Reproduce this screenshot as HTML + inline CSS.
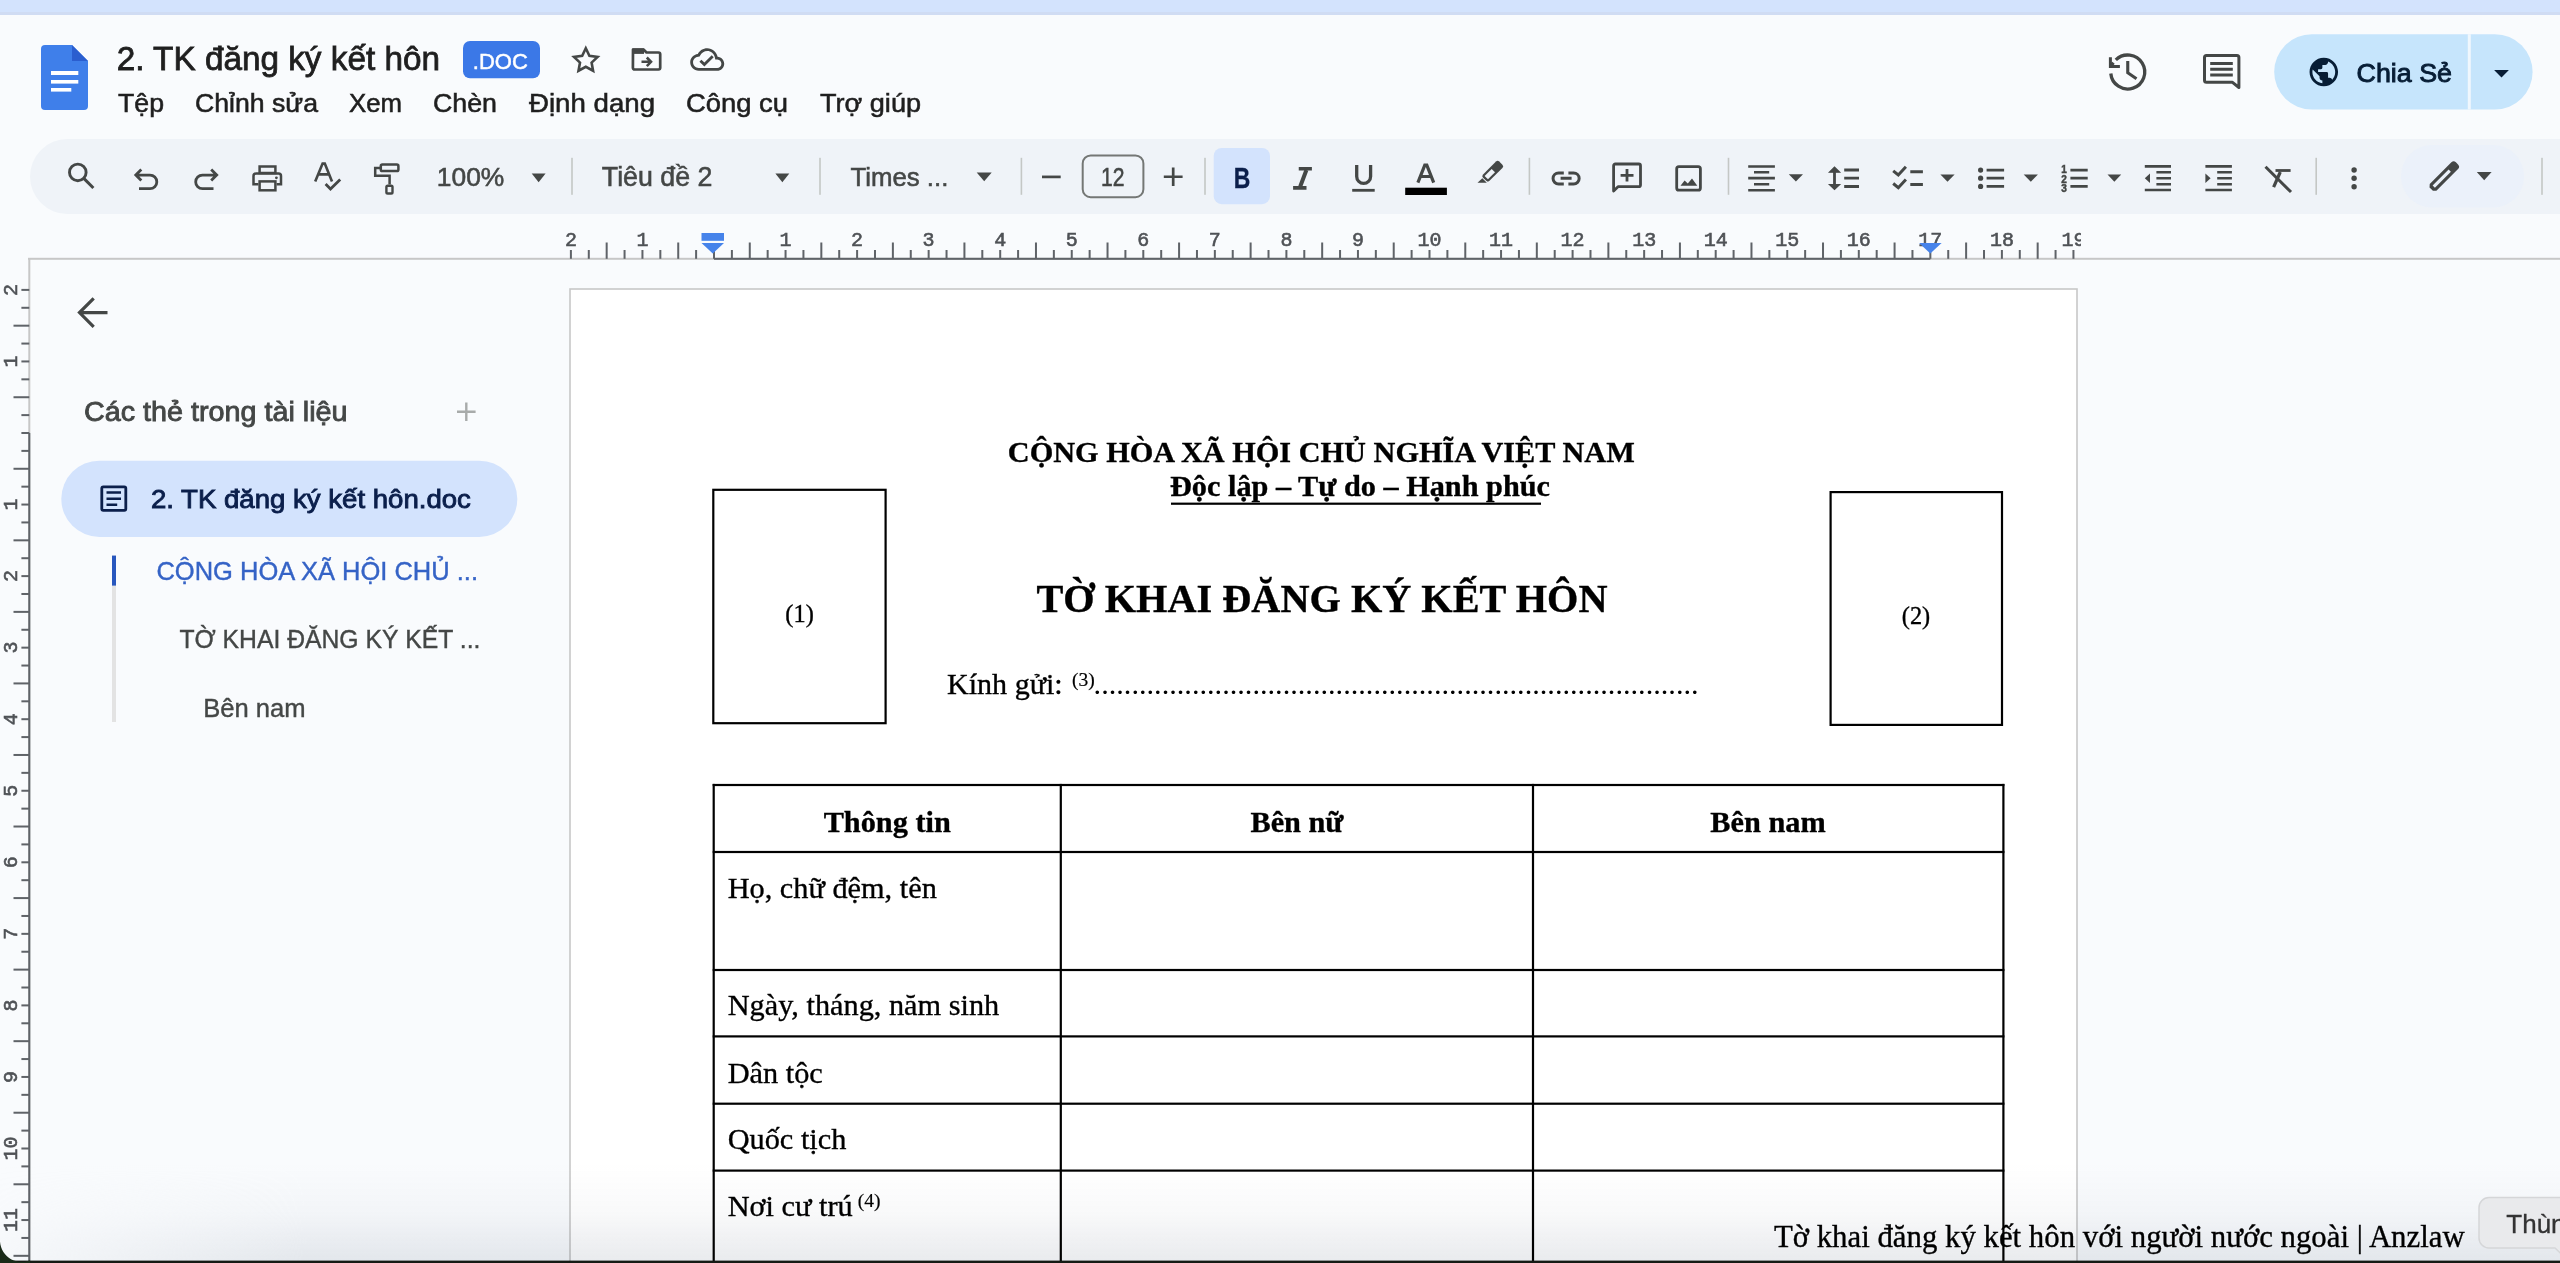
<!DOCTYPE html>
<html><head><meta charset="utf-8"><title>2. TK đăng ký kết hôn</title>
<style>html,body{margin:0;padding:0;background:#f9fbfd;overflow:hidden;width:2560px;height:1263px;font-family:"Liberation Sans",sans-serif}svg{display:block}</style>
</head><body>
<svg width="2560" height="1263" viewBox="0 0 2560 1263">
<rect x="0" y="0" width="2560" height="1263" fill="#f9fbfd"/>
<rect x="0" y="0" width="2560" height="15" fill="#d3e3fd"/>
<rect x="0" y="12" width="2560" height="3" fill="#d0dcf3"/>
<path d="M45,45 H72 L88,61 V106 a4,4 0 0 1 -4,4 H45 a4,4 0 0 1 -4,-4 V49 a4,4 0 0 1 4,-4 Z" fill="#3f7fea"/>
<path d="M72,45 L88,61 H72 Z" fill="#2b5ecf"/>
<rect x="51" y="71" width="27.3" height="4" fill="#fff"/>
<rect x="51" y="80" width="27.3" height="3.6" fill="#fff"/>
<rect x="51" y="88" width="20.3" height="3.6" fill="#fff"/>
<text x="116.7" y="70" font-family="'Liberation Sans'" font-size="33.3" font-weight="400" fill="#1f1f1f" textLength="323.3" lengthAdjust="spacingAndGlyphs"  stroke="#1f1f1f" stroke-width="0.8">2. TK đăng ký kết hôn</text>
<rect x="463" y="41" width="77" height="37.3" rx="7" fill="#3b78e7"/>
<text x="472.8" y="69" font-family="'Liberation Sans'" font-size="22.8" font-weight="400" fill="#ffffff" textLength="55" lengthAdjust="spacingAndGlyphs"  stroke="#ffffff" stroke-width="0.5">.DOC</text>
<text x="118" y="111.6" font-family="'Liberation Sans'" font-size="25.6" font-weight="400" fill="#1f1f1f" textLength="46" lengthAdjust="spacingAndGlyphs"  stroke="#1f1f1f" stroke-width="0.55">Tệp</text>
<text x="195" y="111.6" font-family="'Liberation Sans'" font-size="25.6" font-weight="400" fill="#1f1f1f" textLength="123" lengthAdjust="spacingAndGlyphs"  stroke="#1f1f1f" stroke-width="0.55">Chỉnh sửa</text>
<text x="349" y="111.6" font-family="'Liberation Sans'" font-size="25.6" font-weight="400" fill="#1f1f1f" textLength="53" lengthAdjust="spacingAndGlyphs"  stroke="#1f1f1f" stroke-width="0.55">Xem</text>
<text x="433" y="111.6" font-family="'Liberation Sans'" font-size="25.6" font-weight="400" fill="#1f1f1f" textLength="64" lengthAdjust="spacingAndGlyphs"  stroke="#1f1f1f" stroke-width="0.55">Chèn</text>
<text x="529" y="111.6" font-family="'Liberation Sans'" font-size="25.6" font-weight="400" fill="#1f1f1f" textLength="126" lengthAdjust="spacingAndGlyphs"  stroke="#1f1f1f" stroke-width="0.55">Định dạng</text>
<text x="686" y="111.6" font-family="'Liberation Sans'" font-size="25.6" font-weight="400" fill="#1f1f1f" textLength="102" lengthAdjust="spacingAndGlyphs"  stroke="#1f1f1f" stroke-width="0.55">Công cụ</text>
<text x="820" y="111.6" font-family="'Liberation Sans'" font-size="25.6" font-weight="400" fill="#1f1f1f" textLength="101" lengthAdjust="spacingAndGlyphs"  stroke="#1f1f1f" stroke-width="0.55">Trợ giúp</text>
<rect x="30" y="139" width="2600" height="75" rx="37.5" fill="#eff3f8"/>
<polygon points="585.80,48.30 589.39,55.76 597.59,56.87 591.60,62.59 593.09,70.73 585.80,66.80 578.51,70.73 580.00,62.59 574.01,56.87 582.21,55.76" stroke="#444746" stroke-width="2.6" fill="none" stroke-linejoin="miter" stroke-miterlimit="10"/>
<path d="M633,49.5 H643.5 L646.5,52.5 H658.5 a1.7,1.7 0 0 1 1.7,1.7 V67.8 a1.7,1.7 0 0 1 -1.7,1.7 H634.6 a1.7,1.7 0 0 1 -1.7,-1.7 Z" stroke="#444746" fill="none" stroke-width="2.7" stroke-linejoin="round"/>
<rect x="632.5" y="48.4" width="11.5" height="5.5" fill="#444746"/>
<path d="M641.5,61.8 H650.5 M646.8,57.5 L651,61.8 L646.8,66.1" stroke="#444746" fill="none" stroke-width="2.6"/>
<g transform="translate(690.2,42.53) scale(1.417)"><path fill="#444746" d="M19.35 10.04C18.67 6.59 15.64 4 12 4 9.11 4 6.6 5.64 5.35 8.04 2.34 8.36 0 10.91 0 14c0 3.31 2.69 6 6 6h13c2.760 0 5-2.240 5-5 0-2.640-2.050-4.780-4.650-4.960zM19 18H6c-2.210 0-4-1.790-4-4 0-2.050 1.530-3.760 3.560-3.970l1.070-.11.5-.95C8.080 7.140 9.940 6 12 6c2.620 0 4.880 1.860 5.390 4.430l.3 1.500 1.530.11c1.560.1 2.780 1.410 2.780 2.960 0 1.650-1.350 3-3 3zM10 17l-3.500-3.500 1.410-1.410L10 14.170 15.180 9l1.410 1.410L10 17z"/></g>
<path d="M2115.8,59.9 A17,17 0 1 1 2110.8,73.5" stroke="#444746" fill="none" stroke-width="3.3"/>
<path d="M2110.4,57.3 V66.4 H2119.9" stroke="#444746" fill="none" stroke-width="3"/>
<path d="M2110.6,66.2 L2113.5,62.8" stroke="#444746" fill="none" stroke-width="3.2"/>
<path d="M2127.75,61.1 V72.8 L2136.5,78.8" stroke="#444746" fill="none" stroke-width="3.1"/>
<path d="M2206.5,55.6 H2236.9 a2,2 0 0 1 2,2 V87.5 L2232.5,82.3 H2206.5 a2,2 0 0 1 -2,-2 V57.6 a2,2 0 0 1 2,-2 Z" stroke="#444746" fill="none" stroke-width="3" stroke-linejoin="round"/>
<path d="M2210.2,63.6 H2232.8 M2210.2,69.2 H2232.8 M2210.2,74.9 H2232.8" stroke="#444746" fill="none" stroke-width="3"/>
<rect x="2274.2" y="34.2" width="258.4" height="75.4" rx="37.7" fill="#c6e5fc"/>
<rect x="2467.8" y="34.2" width="3" height="75.4" fill="#f0f7fd"/>
<g transform="translate(2306.7,54.9) scale(1.425)"><path fill="#071d35" d="M12 2C6.48 2 2 6.48 2 12s4.48 10 10 10 10-4.48 10-10S17.52 2 12 2zm-1 17.93c-3.950-.49-7-3.850-7-7.930 0-.62.08-1.210.21-1.790L9 15v1c0 1.100.9 2 2 2v1.930zm6.900-2.540c-.26-.81-1-1.390-1.900-1.390h-1v-3c0-.55-.45-1-1-1H8v-2h2c.55 0 1-.45 1-1V7h2c1.100 0 2-.9 2-2v-.41c2.930 1.190 5 4.060 5 7.410 0 2.080-.8 3.970-2.100 5.390z"/></g>
<text x="2356.5" y="81.5" font-family="'Liberation Sans'" font-size="26.5" font-weight="400" fill="#071d35" textLength="95.5" lengthAdjust="spacingAndGlyphs"  stroke="#071d35" stroke-width="0.9">Chia Sẻ</text>
<path d="M2494.1,70.1 H2508.9 L2501.5,77.6 Z" fill="#071d35"/>
<circle cx="77.8" cy="172.4" r="8.3" stroke="#444746" fill="none" stroke-width="2.9"/>
<path d="M83.8,178.4 L93.4,188" stroke="#444746" fill="none" stroke-width="3"/>
<path d="M141.3,169.6 L135.8,175.1 L141.3,180.6 M136.5,175.1 H150 a6.8,6.8 0 0 1 0,13.6 H139" stroke="#444746" fill="none" stroke-width="2.8" stroke-linejoin="miter"/>
<path d="M211.2,169.6 L216.7,175.1 L211.2,180.6 M216,175.1 H202.5 a6.8,6.8 0 0 0 0,13.6 H213.5" stroke="#444746" fill="none" stroke-width="2.8" stroke-linejoin="miter"/>
<rect x="259.6" y="166.5" width="15.8" height="6.5" stroke="#444746" fill="none" stroke-width="2.5"/>
<path d="M258.4,184.3 H253.5 V176 a2.5,2.5 0 0 1 2.5,-2.5 H278.5 a2.5,2.5 0 0 1 2.5,2.5 V184.3 H276.6" stroke="#444746" fill="none" stroke-width="2.5"/>
<rect x="259.6" y="181.4" width="15.8" height="8.9" stroke="#444746" fill="none" stroke-width="2.5"/>
<circle cx="276.4" cy="177.8" r="1.4" fill="#444746"/>
<path d="M315.2,181.6 L322.6,163.6 H324.8 L332,181.6 M317.6,174.4 H329.4" stroke="#444746" fill="none" stroke-width="2.6"/>
<path d="M325.6,184 L330.5,189 L340.2,179.5" stroke="#444746" fill="none" stroke-width="2.8"/>
<rect x="380.8" y="164.6" width="17.6" height="6.5" rx="1.6" stroke="#444746" fill="none" stroke-width="2.5"/>
<path d="M380.5,168 H375.2 V175.8 H389.6 V184.5" stroke="#444746" fill="none" stroke-width="2.5"/>
<rect x="386.4" y="185.7" width="6.1" height="7.8" rx="1.3" stroke="#444746" fill="none" stroke-width="2.4"/>
<text x="436.8" y="186.4" font-family="'Liberation Sans'" font-size="26.4" font-weight="400" fill="#444746" textLength="67.5" lengthAdjust="spacingAndGlyphs"  stroke="#444746" stroke-width="0.55">100%</text>
<path d="M531.7,173.5 H545.6 L538.65,182.3 Z" fill="#444746"/>
<rect x="571.2" y="157.8" width="1.6" height="37" fill="#c4c7c5"/>
<text x="601.8" y="186.4" font-family="'Liberation Sans'" font-size="26.8" font-weight="400" fill="#444746" textLength="110.6" lengthAdjust="spacingAndGlyphs"  stroke="#444746" stroke-width="0.55">Tiêu đề 2</text>
<path d="M775.4,173.5 H789.3 L782.35,182.3 Z" fill="#444746"/>
<rect x="819.2" y="157.8" width="1.6" height="37" fill="#c4c7c5"/>
<text x="850.4" y="186.4" font-family="'Liberation Sans'" font-size="26.5" font-weight="400" fill="#444746" textLength="98" lengthAdjust="spacingAndGlyphs"  stroke="#444746" stroke-width="0.55">Times ...</text>
<path d="M976.7,172.5 H991.7 L984.20,181.3 Z" fill="#444746"/>
<rect x="1020.6" y="157.8" width="1.6" height="37" fill="#c4c7c5"/>
<path d="M1042,176.9 H1060.7" stroke="#444746" fill="none" stroke-width="2.7"/>
<rect x="1082.7" y="155.4" width="60.7" height="41.8" rx="8" stroke="#747775" stroke-width="2" fill="none"/>
<text x="1112.7" y="185.5" font-family="'Liberation Sans'" font-size="26" font-weight="400" fill="#444746" text-anchor="middle" textLength="23.5" lengthAdjust="spacingAndGlyphs"  stroke="#444746" stroke-width="0.55">12</text>
<path d="M1173.2,167.5 V186 M1163.8,176.75 H1182.6" stroke="#444746" fill="none" stroke-width="2.7"/>
<rect x="1204.2" y="157.8" width="1.6" height="37" fill="#c4c7c5"/>
<rect x="1213.7" y="148" width="56.3" height="56.2" rx="8" fill="#d3e3fd"/>
<text x="1242.1" y="188" font-family="'Liberation Sans'" font-size="29.2" font-weight="700" fill="#0b1f4b" text-anchor="middle" textLength="16.6" lengthAdjust="spacingAndGlyphs"  stroke="#0b1f4b" stroke-width="0.3">B</text>
<path d="M1298.75,168.75 H1311.9 M1293.1,187.95 H1306.5" stroke="#444746" fill="none" stroke-width="3.7"/>
<path d="M1306.4,170 L1300.2,186.5" stroke="#444746" fill="none" stroke-width="4"/>
<path d="M1356.7,165 V176.5 a6.95,6.95 0 0 0 13.9,0 V165" stroke="#444746" fill="none" stroke-width="3.3"/>
<rect x="1352.2" y="188.9" width="22.5" height="2.8" fill="#444746"/>
<path d="M1417.9,182.6 L1424.8,165.2 H1426.8 L1433.7,182.6 M1420.3,176.5 H1431.3" stroke="#444746" fill="none" stroke-width="3.2"/>
<rect x="1405.2" y="187.7" width="41.7" height="7.3" fill="#000"/>
<g transform="translate(1492.7,171.2) rotate(-45)"><rect x="-11.4" y="-4.55" width="22.9" height="9.1" rx="2.3" fill="#444746"/><rect x="-9.1" y="-2.35" width="10" height="4.7" fill="#eff3f8"/></g>
<path d="M1477.5,182.8 L1482.3,178.2 L1486.8,182.8 Z" fill="#444746"/>
<rect x="1528.6000000000001" y="157.8" width="1.6" height="37" fill="#c4c7c5"/>
<path d="M1563.8,172.9 H1558.6 a5.55,5.55 0 0 0 0,11.1 H1563.8 M1568.4,172.9 H1573.6 a5.55,5.55 0 0 1 0,11.1 H1568.4 M1560.6,178.3 H1571.6" stroke="#444746" fill="none" stroke-width="3"/>
<path d="M1613.6,191 V165.7 a1.7,1.7 0 0 1 1.7,-1.7 H1638.8 a1.7,1.7 0 0 1 1.7,1.7 V185 a1.7,1.7 0 0 1 -1.7,1.7 H1618 Z" stroke="#444746" fill="none" stroke-width="2.8" stroke-linejoin="round"/>
<path d="M1627,169 V181.6 M1620.6,175.3 H1633.5" stroke="#444746" fill="none" stroke-width="2.8"/>
<rect x="1676.7" y="166.6" width="23.7" height="23.5" rx="2.2" stroke="#444746" fill="none" stroke-width="2.8"/>
<path d="M1680.5,185.8 L1684.6,180.5 L1687.8,183.6 L1692,178.4 L1697.3,185.8 Z" fill="#444746"/>
<rect x="1727.7" y="157.8" width="1.6" height="37" fill="#c4c7c5"/>
<path d="M1748.2,166.5 H1774.9 M1754,172.2 H1769.2 M1748.2,178.1 H1774.9 M1754,184.2 H1769.2 M1748.2,190.3 H1774.9" stroke="#444746" fill="none" stroke-width="2.6"/>
<path d="M1788.8,174.2 H1803 L1795.90,181.6 Z" fill="#444746"/>
<path d="M1834.5,169 V188" stroke="#444746" fill="none" stroke-width="2.8"/>
<path d="M1829.4,172.2 L1834.5,167.2 L1839.7,172.2 Z M1829.4,184.5 L1834.5,189.5 L1839.7,184.5 Z" fill="#444746" stroke="#444746" stroke-width="1.2"/>
<path d="M1844.2,170 H1859 M1844.2,178.1 H1859 M1844.2,186.5 H1859" stroke="#444746" fill="none" stroke-width="2.8"/>
<path d="M1893.2,170.8 L1898.3,175 L1905.9,166.8 M1893.2,183.5 L1898.3,187.7 L1905.9,179.5" stroke="#444746" fill="none" stroke-width="3"/>
<path d="M1910.3,171.8 H1922.9 M1910.3,184.5 H1922.9" stroke="#444746" fill="none" stroke-width="2.9"/>
<path d="M1940.4,174.4 H1954.6 L1947.50,181.7 Z" fill="#444746"/>
<circle cx="1980.6" cy="170.1" r="2.6" fill="#444746"/>
<circle cx="1980.6" cy="178.2" r="2.6" fill="#444746"/>
<circle cx="1980.6" cy="186.4" r="2.6" fill="#444746"/>
<path d="M1986.6,170.1 H2004.1 M1986.6,178.2 H2004.1 M1986.6,186.4 H2004.1" stroke="#444746" fill="none" stroke-width="2.8"/>
<path d="M2023.7,174.4 H2037.9 L2030.80,181.7 Z" fill="#444746"/>
<text x="2064.1" y="173.4" font-family="'Liberation Sans'" font-size="11.2" font-weight="700" fill="#444746" stroke="#444746" stroke-width="0.5" text-anchor="middle" textLength="5.6" lengthAdjust="spacingAndGlyphs">1</text>
<text x="2064.1" y="182.5" font-family="'Liberation Sans'" font-size="11.2" font-weight="700" fill="#444746" stroke="#444746" stroke-width="0.5" text-anchor="middle" textLength="5.6" lengthAdjust="spacingAndGlyphs">2</text>
<text x="2064.1" y="191.6" font-family="'Liberation Sans'" font-size="11.2" font-weight="700" fill="#444746" stroke="#444746" stroke-width="0.5" text-anchor="middle" textLength="5.6" lengthAdjust="spacingAndGlyphs">3</text>
<path d="M2070.4,170.1 H2087.7 M2070.4,178.2 H2087.7 M2070.4,186.4 H2087.7" stroke="#444746" fill="none" stroke-width="2.8"/>
<path d="M2107.5,174.4 H2121.2 L2114.35,181.7 Z" fill="#444746"/>
<path d="M2144.8,166.4 H2171 M2156.4,172.3 H2171 M2156.4,178.3 H2171 M2156.4,184.2 H2171 M2144.8,190 H2171" stroke="#444746" fill="none" stroke-width="2.6"/>
<path d="M2144.8,178.3 L2150,173.4 V183 Z" fill="#444746"/>
<path d="M2205.4,166.4 H2231.9 M2217.2,172.3 H2231.9 M2217.2,178.3 H2231.9 M2217.2,184.2 H2231.9 M2205.4,190 H2231.9" stroke="#444746" fill="none" stroke-width="2.6"/>
<path d="M2210.6,178.3 L2205.4,173.4 V183 Z" fill="#444746"/>
<path d="M2265.5,166.8 L2291,192" stroke="#444746" fill="none" stroke-width="3"/>
<path d="M2275.5,170.5 H2290.6" stroke="#444746" fill="none" stroke-width="2.8"/>
<path d="M2280.3,172 L2273.6,187.1" stroke="#444746" fill="none" stroke-width="3.2"/>
<rect x="2315.3999999999996" y="157.8" width="1.6" height="37" fill="#c4c7c5"/>
<circle cx="2354.1" cy="170" r="2.7" fill="#444746"/>
<circle cx="2354.1" cy="178.3" r="2.7" fill="#444746"/>
<circle cx="2354.1" cy="186.8" r="2.7" fill="#444746"/>
<rect x="2401" y="145" width="123" height="62.5" rx="31" fill="#ebf1fa"/>
<g transform="translate(2444.1,176.3) rotate(-45)"><path d="M-18.2,-2.4 L-15.6,-4.7 H15 a3.2,3.2 0 0 1 3.2,3.2 V1.5 a3.2,3.2 0 0 1 -3.2,3.2 H-15.6 L-18.2,2.4 Z" fill="#444746"/><rect x="-14.6" y="-1.6" width="22.6" height="3.2" fill="#ebf1fa"/></g>
<path d="M2476.8,172 H2491.6 L2484.20,180.2 Z" fill="#444746"/>
<rect x="2541.2" y="157.8" width="1.6" height="37" fill="#c4c7c5"/>
<rect x="28" y="257.8" width="2532" height="2" fill="#c7c7c7"/>
<rect x="714.0" y="257.8" width="1216.3" height="2" fill="#5f6368"/>
<rect x="569.90" y="250" width="2" height="8.8" fill="#5f6368"/>
<rect x="587.79" y="250" width="2" height="8.8" fill="#5f6368"/>
<rect x="605.67" y="242.5" width="2" height="16.3" fill="#5f6368"/>
<rect x="623.56" y="250" width="2" height="8.8" fill="#5f6368"/>
<rect x="641.45" y="250" width="2" height="8.8" fill="#5f6368"/>
<rect x="659.34" y="250" width="2" height="8.8" fill="#5f6368"/>
<rect x="677.23" y="242.5" width="2" height="16.3" fill="#5f6368"/>
<rect x="695.11" y="250" width="2" height="8.8" fill="#5f6368"/>
<rect x="713.00" y="250" width="2" height="8.8" fill="#5f6368"/>
<rect x="730.89" y="250" width="2" height="8.8" fill="#5f6368"/>
<rect x="748.77" y="242.5" width="2" height="16.3" fill="#5f6368"/>
<rect x="766.66" y="250" width="2" height="8.8" fill="#5f6368"/>
<rect x="784.55" y="250" width="2" height="8.8" fill="#5f6368"/>
<rect x="802.44" y="250" width="2" height="8.8" fill="#5f6368"/>
<rect x="820.33" y="242.5" width="2" height="16.3" fill="#5f6368"/>
<rect x="838.21" y="250" width="2" height="8.8" fill="#5f6368"/>
<rect x="856.10" y="250" width="2" height="8.8" fill="#5f6368"/>
<rect x="873.99" y="250" width="2" height="8.8" fill="#5f6368"/>
<rect x="891.88" y="242.5" width="2" height="16.3" fill="#5f6368"/>
<rect x="909.76" y="250" width="2" height="8.8" fill="#5f6368"/>
<rect x="927.65" y="250" width="2" height="8.8" fill="#5f6368"/>
<rect x="945.54" y="250" width="2" height="8.8" fill="#5f6368"/>
<rect x="963.42" y="242.5" width="2" height="16.3" fill="#5f6368"/>
<rect x="981.31" y="250" width="2" height="8.8" fill="#5f6368"/>
<rect x="999.20" y="250" width="2" height="8.8" fill="#5f6368"/>
<rect x="1017.09" y="250" width="2" height="8.8" fill="#5f6368"/>
<rect x="1034.97" y="242.5" width="2" height="16.3" fill="#5f6368"/>
<rect x="1052.86" y="250" width="2" height="8.8" fill="#5f6368"/>
<rect x="1070.75" y="250" width="2" height="8.8" fill="#5f6368"/>
<rect x="1088.64" y="250" width="2" height="8.8" fill="#5f6368"/>
<rect x="1106.53" y="242.5" width="2" height="16.3" fill="#5f6368"/>
<rect x="1124.41" y="250" width="2" height="8.8" fill="#5f6368"/>
<rect x="1142.30" y="250" width="2" height="8.8" fill="#5f6368"/>
<rect x="1160.19" y="250" width="2" height="8.8" fill="#5f6368"/>
<rect x="1178.08" y="242.5" width="2" height="16.3" fill="#5f6368"/>
<rect x="1195.96" y="250" width="2" height="8.8" fill="#5f6368"/>
<rect x="1213.85" y="250" width="2" height="8.8" fill="#5f6368"/>
<rect x="1231.74" y="250" width="2" height="8.8" fill="#5f6368"/>
<rect x="1249.62" y="242.5" width="2" height="16.3" fill="#5f6368"/>
<rect x="1267.51" y="250" width="2" height="8.8" fill="#5f6368"/>
<rect x="1285.40" y="250" width="2" height="8.8" fill="#5f6368"/>
<rect x="1303.29" y="250" width="2" height="8.8" fill="#5f6368"/>
<rect x="1321.17" y="242.5" width="2" height="16.3" fill="#5f6368"/>
<rect x="1339.06" y="250" width="2" height="8.8" fill="#5f6368"/>
<rect x="1356.95" y="250" width="2" height="8.8" fill="#5f6368"/>
<rect x="1374.84" y="250" width="2" height="8.8" fill="#5f6368"/>
<rect x="1392.72" y="242.5" width="2" height="16.3" fill="#5f6368"/>
<rect x="1410.61" y="250" width="2" height="8.8" fill="#5f6368"/>
<rect x="1428.50" y="250" width="2" height="8.8" fill="#5f6368"/>
<rect x="1446.39" y="250" width="2" height="8.8" fill="#5f6368"/>
<rect x="1464.28" y="242.5" width="2" height="16.3" fill="#5f6368"/>
<rect x="1482.16" y="250" width="2" height="8.8" fill="#5f6368"/>
<rect x="1500.05" y="250" width="2" height="8.8" fill="#5f6368"/>
<rect x="1517.94" y="250" width="2" height="8.8" fill="#5f6368"/>
<rect x="1535.82" y="242.5" width="2" height="16.3" fill="#5f6368"/>
<rect x="1553.71" y="250" width="2" height="8.8" fill="#5f6368"/>
<rect x="1571.60" y="250" width="2" height="8.8" fill="#5f6368"/>
<rect x="1589.49" y="250" width="2" height="8.8" fill="#5f6368"/>
<rect x="1607.38" y="242.5" width="2" height="16.3" fill="#5f6368"/>
<rect x="1625.26" y="250" width="2" height="8.8" fill="#5f6368"/>
<rect x="1643.15" y="250" width="2" height="8.8" fill="#5f6368"/>
<rect x="1661.04" y="250" width="2" height="8.8" fill="#5f6368"/>
<rect x="1678.92" y="242.5" width="2" height="16.3" fill="#5f6368"/>
<rect x="1696.81" y="250" width="2" height="8.8" fill="#5f6368"/>
<rect x="1714.70" y="250" width="2" height="8.8" fill="#5f6368"/>
<rect x="1732.59" y="250" width="2" height="8.8" fill="#5f6368"/>
<rect x="1750.47" y="242.5" width="2" height="16.3" fill="#5f6368"/>
<rect x="1768.36" y="250" width="2" height="8.8" fill="#5f6368"/>
<rect x="1786.25" y="250" width="2" height="8.8" fill="#5f6368"/>
<rect x="1804.14" y="250" width="2" height="8.8" fill="#5f6368"/>
<rect x="1822.02" y="242.5" width="2" height="16.3" fill="#5f6368"/>
<rect x="1839.91" y="250" width="2" height="8.8" fill="#5f6368"/>
<rect x="1857.80" y="250" width="2" height="8.8" fill="#5f6368"/>
<rect x="1875.69" y="250" width="2" height="8.8" fill="#5f6368"/>
<rect x="1893.58" y="242.5" width="2" height="16.3" fill="#5f6368"/>
<rect x="1911.46" y="250" width="2" height="8.8" fill="#5f6368"/>
<rect x="1929.35" y="250" width="2" height="8.8" fill="#5f6368"/>
<rect x="1947.24" y="250" width="2" height="8.8" fill="#5f6368"/>
<rect x="1965.12" y="242.5" width="2" height="16.3" fill="#5f6368"/>
<rect x="1983.01" y="250" width="2" height="8.8" fill="#5f6368"/>
<rect x="2000.90" y="250" width="2" height="8.8" fill="#5f6368"/>
<rect x="2018.79" y="250" width="2" height="8.8" fill="#5f6368"/>
<rect x="2036.67" y="242.5" width="2" height="16.3" fill="#5f6368"/>
<rect x="2054.56" y="250" width="2" height="8.8" fill="#5f6368"/>
<rect x="2072.45" y="250" width="2" height="8.8" fill="#5f6368"/>
<defs><clipPath id="rc"><rect x="0" y="215" width="2081" height="40"/></clipPath></defs><g clip-path="url(#rc)">
<text x="570.9" y="246.3" font-family="'Liberation Mono'" font-size="20" font-weight="400" fill="#4f5256" text-anchor="middle"  stroke="#4f5256" stroke-width="0.6">2</text>
<text x="642.5" y="246.3" font-family="'Liberation Mono'" font-size="20" font-weight="400" fill="#4f5256" text-anchor="middle"  stroke="#4f5256" stroke-width="0.6">1</text>
<text x="785.5" y="246.3" font-family="'Liberation Mono'" font-size="20" font-weight="400" fill="#4f5256" text-anchor="middle"  stroke="#4f5256" stroke-width="0.6">1</text>
<text x="857.1" y="246.3" font-family="'Liberation Mono'" font-size="20" font-weight="400" fill="#4f5256" text-anchor="middle"  stroke="#4f5256" stroke-width="0.6">2</text>
<text x="928.6" y="246.3" font-family="'Liberation Mono'" font-size="20" font-weight="400" fill="#4f5256" text-anchor="middle"  stroke="#4f5256" stroke-width="0.6">3</text>
<text x="1000.2" y="246.3" font-family="'Liberation Mono'" font-size="20" font-weight="400" fill="#4f5256" text-anchor="middle"  stroke="#4f5256" stroke-width="0.6">4</text>
<text x="1071.8" y="246.3" font-family="'Liberation Mono'" font-size="20" font-weight="400" fill="#4f5256" text-anchor="middle"  stroke="#4f5256" stroke-width="0.6">5</text>
<text x="1143.3" y="246.3" font-family="'Liberation Mono'" font-size="20" font-weight="400" fill="#4f5256" text-anchor="middle"  stroke="#4f5256" stroke-width="0.6">6</text>
<text x="1214.8" y="246.3" font-family="'Liberation Mono'" font-size="20" font-weight="400" fill="#4f5256" text-anchor="middle"  stroke="#4f5256" stroke-width="0.6">7</text>
<text x="1286.4" y="246.3" font-family="'Liberation Mono'" font-size="20" font-weight="400" fill="#4f5256" text-anchor="middle"  stroke="#4f5256" stroke-width="0.6">8</text>
<text x="1357.9" y="246.3" font-family="'Liberation Mono'" font-size="20" font-weight="400" fill="#4f5256" text-anchor="middle"  stroke="#4f5256" stroke-width="0.6">9</text>
<text x="1429.5" y="246.3" font-family="'Liberation Mono'" font-size="20" font-weight="400" fill="#4f5256" text-anchor="middle"  stroke="#4f5256" stroke-width="0.6">10</text>
<text x="1501.0" y="246.3" font-family="'Liberation Mono'" font-size="20" font-weight="400" fill="#4f5256" text-anchor="middle"  stroke="#4f5256" stroke-width="0.6">11</text>
<text x="1572.6" y="246.3" font-family="'Liberation Mono'" font-size="20" font-weight="400" fill="#4f5256" text-anchor="middle"  stroke="#4f5256" stroke-width="0.6">12</text>
<text x="1644.2" y="246.3" font-family="'Liberation Mono'" font-size="20" font-weight="400" fill="#4f5256" text-anchor="middle"  stroke="#4f5256" stroke-width="0.6">13</text>
<text x="1715.7" y="246.3" font-family="'Liberation Mono'" font-size="20" font-weight="400" fill="#4f5256" text-anchor="middle"  stroke="#4f5256" stroke-width="0.6">14</text>
<text x="1787.2" y="246.3" font-family="'Liberation Mono'" font-size="20" font-weight="400" fill="#4f5256" text-anchor="middle"  stroke="#4f5256" stroke-width="0.6">15</text>
<text x="1858.8" y="246.3" font-family="'Liberation Mono'" font-size="20" font-weight="400" fill="#4f5256" text-anchor="middle"  stroke="#4f5256" stroke-width="0.6">16</text>
<text x="1930.3" y="246.3" font-family="'Liberation Mono'" font-size="20" font-weight="400" fill="#4f5256" text-anchor="middle"  stroke="#4f5256" stroke-width="0.6">17</text>
<text x="2001.9" y="246.3" font-family="'Liberation Mono'" font-size="20" font-weight="400" fill="#4f5256" text-anchor="middle"  stroke="#4f5256" stroke-width="0.6">18</text>
<text x="2073.4" y="246.3" font-family="'Liberation Mono'" font-size="20" font-weight="400" fill="#4f5256" text-anchor="middle"  stroke="#4f5256" stroke-width="0.6">19</text>
</g>
<rect x="701.5" y="233" width="22.5" height="7.8" fill="#4683ea"/>
<path d="M701.5,243 H724 L712.75,253.5 Z" fill="#4683ea"/>
<path d="M1919.1,243 H1941.6 L1930.3,253.5 Z" fill="#4683ea"/>
<rect x="28.3" y="259" width="2" height="1004" fill="#c7c7c7"/>
<rect x="28.3" y="433.0" width="2" height="830" fill="#5f6368"/>
<rect x="21.4" y="288.90" width="7.9" height="2" fill="#5f6368"/>
<rect x="21.4" y="306.79" width="7.9" height="2" fill="#5f6368"/>
<rect x="13.5" y="324.68" width="15.8" height="2" fill="#5f6368"/>
<rect x="21.4" y="342.56" width="7.9" height="2" fill="#5f6368"/>
<rect x="21.4" y="360.45" width="7.9" height="2" fill="#5f6368"/>
<rect x="21.4" y="378.34" width="7.9" height="2" fill="#5f6368"/>
<rect x="13.5" y="396.23" width="15.8" height="2" fill="#5f6368"/>
<rect x="21.4" y="414.11" width="7.9" height="2" fill="#5f6368"/>
<rect x="21.4" y="432.00" width="7.9" height="2" fill="#5f6368"/>
<rect x="21.4" y="449.89" width="7.9" height="2" fill="#5f6368"/>
<rect x="13.5" y="467.77" width="15.8" height="2" fill="#5f6368"/>
<rect x="21.4" y="485.66" width="7.9" height="2" fill="#5f6368"/>
<rect x="21.4" y="503.55" width="7.9" height="2" fill="#5f6368"/>
<rect x="21.4" y="521.44" width="7.9" height="2" fill="#5f6368"/>
<rect x="13.5" y="539.33" width="15.8" height="2" fill="#5f6368"/>
<rect x="21.4" y="557.21" width="7.9" height="2" fill="#5f6368"/>
<rect x="21.4" y="575.10" width="7.9" height="2" fill="#5f6368"/>
<rect x="21.4" y="592.99" width="7.9" height="2" fill="#5f6368"/>
<rect x="13.5" y="610.88" width="15.8" height="2" fill="#5f6368"/>
<rect x="21.4" y="628.76" width="7.9" height="2" fill="#5f6368"/>
<rect x="21.4" y="646.65" width="7.9" height="2" fill="#5f6368"/>
<rect x="21.4" y="664.54" width="7.9" height="2" fill="#5f6368"/>
<rect x="13.5" y="682.42" width="15.8" height="2" fill="#5f6368"/>
<rect x="21.4" y="700.31" width="7.9" height="2" fill="#5f6368"/>
<rect x="21.4" y="718.20" width="7.9" height="2" fill="#5f6368"/>
<rect x="21.4" y="736.09" width="7.9" height="2" fill="#5f6368"/>
<rect x="13.5" y="753.97" width="15.8" height="2" fill="#5f6368"/>
<rect x="21.4" y="771.86" width="7.9" height="2" fill="#5f6368"/>
<rect x="21.4" y="789.75" width="7.9" height="2" fill="#5f6368"/>
<rect x="21.4" y="807.64" width="7.9" height="2" fill="#5f6368"/>
<rect x="13.5" y="825.52" width="15.8" height="2" fill="#5f6368"/>
<rect x="21.4" y="843.41" width="7.9" height="2" fill="#5f6368"/>
<rect x="21.4" y="861.30" width="7.9" height="2" fill="#5f6368"/>
<rect x="21.4" y="879.19" width="7.9" height="2" fill="#5f6368"/>
<rect x="13.5" y="897.08" width="15.8" height="2" fill="#5f6368"/>
<rect x="21.4" y="914.96" width="7.9" height="2" fill="#5f6368"/>
<rect x="21.4" y="932.85" width="7.9" height="2" fill="#5f6368"/>
<rect x="21.4" y="950.74" width="7.9" height="2" fill="#5f6368"/>
<rect x="13.5" y="968.62" width="15.8" height="2" fill="#5f6368"/>
<rect x="21.4" y="986.51" width="7.9" height="2" fill="#5f6368"/>
<rect x="21.4" y="1004.40" width="7.9" height="2" fill="#5f6368"/>
<rect x="21.4" y="1022.29" width="7.9" height="2" fill="#5f6368"/>
<rect x="13.5" y="1040.17" width="15.8" height="2" fill="#5f6368"/>
<rect x="21.4" y="1058.06" width="7.9" height="2" fill="#5f6368"/>
<rect x="21.4" y="1075.95" width="7.9" height="2" fill="#5f6368"/>
<rect x="21.4" y="1093.84" width="7.9" height="2" fill="#5f6368"/>
<rect x="13.5" y="1111.72" width="15.8" height="2" fill="#5f6368"/>
<rect x="21.4" y="1129.61" width="7.9" height="2" fill="#5f6368"/>
<rect x="21.4" y="1147.50" width="7.9" height="2" fill="#5f6368"/>
<rect x="21.4" y="1165.39" width="7.9" height="2" fill="#5f6368"/>
<rect x="13.5" y="1183.28" width="15.8" height="2" fill="#5f6368"/>
<rect x="21.4" y="1201.16" width="7.9" height="2" fill="#5f6368"/>
<rect x="21.4" y="1219.05" width="7.9" height="2" fill="#5f6368"/>
<rect x="21.4" y="1236.94" width="7.9" height="2" fill="#5f6368"/>
<rect x="13.5" y="1254.82" width="15.8" height="2" fill="#5f6368"/>
<text x="0" y="0" transform="translate(16.5,289.9) rotate(-90)" font-family="'Liberation Mono'" font-size="20" fill="#4f5256" stroke="#4f5256" stroke-width="0.6" text-anchor="middle">2</text>
<text x="0" y="0" transform="translate(16.5,361.4) rotate(-90)" font-family="'Liberation Mono'" font-size="20" fill="#4f5256" stroke="#4f5256" stroke-width="0.6" text-anchor="middle">1</text>
<text x="0" y="0" transform="translate(16.5,504.6) rotate(-90)" font-family="'Liberation Mono'" font-size="20" fill="#4f5256" stroke="#4f5256" stroke-width="0.6" text-anchor="middle">1</text>
<text x="0" y="0" transform="translate(16.5,576.1) rotate(-90)" font-family="'Liberation Mono'" font-size="20" fill="#4f5256" stroke="#4f5256" stroke-width="0.6" text-anchor="middle">2</text>
<text x="0" y="0" transform="translate(16.5,647.6) rotate(-90)" font-family="'Liberation Mono'" font-size="20" fill="#4f5256" stroke="#4f5256" stroke-width="0.6" text-anchor="middle">3</text>
<text x="0" y="0" transform="translate(16.5,719.2) rotate(-90)" font-family="'Liberation Mono'" font-size="20" fill="#4f5256" stroke="#4f5256" stroke-width="0.6" text-anchor="middle">4</text>
<text x="0" y="0" transform="translate(16.5,790.8) rotate(-90)" font-family="'Liberation Mono'" font-size="20" fill="#4f5256" stroke="#4f5256" stroke-width="0.6" text-anchor="middle">5</text>
<text x="0" y="0" transform="translate(16.5,862.3) rotate(-90)" font-family="'Liberation Mono'" font-size="20" fill="#4f5256" stroke="#4f5256" stroke-width="0.6" text-anchor="middle">6</text>
<text x="0" y="0" transform="translate(16.5,933.8) rotate(-90)" font-family="'Liberation Mono'" font-size="20" fill="#4f5256" stroke="#4f5256" stroke-width="0.6" text-anchor="middle">7</text>
<text x="0" y="0" transform="translate(16.5,1005.4) rotate(-90)" font-family="'Liberation Mono'" font-size="20" fill="#4f5256" stroke="#4f5256" stroke-width="0.6" text-anchor="middle">8</text>
<text x="0" y="0" transform="translate(16.5,1076.9) rotate(-90)" font-family="'Liberation Mono'" font-size="20" fill="#4f5256" stroke="#4f5256" stroke-width="0.6" text-anchor="middle">9</text>
<text x="0" y="0" transform="translate(16.5,1148.5) rotate(-90)" font-family="'Liberation Mono'" font-size="20" fill="#4f5256" stroke="#4f5256" stroke-width="0.6" text-anchor="middle">10</text>
<text x="0" y="0" transform="translate(16.5,1220.0) rotate(-90)" font-family="'Liberation Mono'" font-size="20" fill="#4f5256" stroke="#4f5256" stroke-width="0.6" text-anchor="middle">11</text>
<path d="M107.5,312.6 H80 M93.7,298.4 L79.5,312.6 L93.7,326.8" stroke="#444746" stroke-width="3.2" fill="none"/>
<text x="84" y="421" font-family="'Liberation Sans'" font-size="26.8" font-weight="400" fill="#444746" textLength="263.5" lengthAdjust="spacingAndGlyphs"  stroke="#444746" stroke-width="0.85">Các thẻ trong tài liệu</text>
<path d="M466.3,402.5 V421 M457,411.8 H475.6" stroke="#a8abaa" stroke-width="2.4"/>
<rect x="61.3" y="460.7" width="456" height="76.3" rx="38" fill="#d3e3fd"/>
<rect x="101.8" y="486.8" width="24" height="23.5" rx="1.5" stroke="#0b1f4b" stroke-width="2.8" fill="none"/>
<path d="M106.5,492.6 H121 M106.5,498.7 H121 M106.5,504.7 H117.2" stroke="#0b1f4b" stroke-width="2.5"/>
<text x="150.9" y="508" font-family="'Liberation Sans'" font-size="26.5" font-weight="400" fill="#0b1f4b" textLength="320" lengthAdjust="spacingAndGlyphs"  stroke="#0b1f4b" stroke-width="0.9">2. TK đăng ký kết hôn.doc</text>
<rect x="112" y="555.6" width="4" height="166.4" fill="#e3e3e3"/>
<rect x="112" y="555.6" width="4" height="30" fill="#2857be"/>
<text x="156.4" y="580" font-family="'Liberation Sans'" font-size="26" font-weight="400" fill="#3563c6" textLength="321.6" lengthAdjust="spacingAndGlyphs"  stroke="#3563c6" stroke-width="0.4">CỘNG HÒA XÃ HỘI CHỦ ...</text>
<text x="179.4" y="648.3" font-family="'Liberation Sans'" font-size="26" font-weight="400" fill="#444746" textLength="301" lengthAdjust="spacingAndGlyphs"  stroke="#444746" stroke-width="0.4">TỜ KHAI ĐĂNG KÝ KẾT ...</text>
<text x="203.2" y="717" font-family="'Liberation Sans'" font-size="26" font-weight="400" fill="#444746" textLength="102.5" lengthAdjust="spacingAndGlyphs"  stroke="#444746" stroke-width="0.4">Bên nam</text>
<rect x="570" y="289" width="1507" height="1000" fill="#ffffff" stroke="#c7c7c7" stroke-width="1.6"/>
<text x="1007.8" y="462" font-family="'Liberation Serif'" font-size="30.3" font-weight="700" fill="#000" textLength="627" lengthAdjust="spacingAndGlyphs"  stroke="#000" stroke-width="0.3">CỘNG HÒA XÃ HỘI CHỦ NGHĨA VIỆT NAM</text>
<text x="1170" y="496" font-family="'Liberation Serif'" font-size="30.3" font-weight="700" fill="#000" textLength="380" lengthAdjust="spacingAndGlyphs"  stroke="#000" stroke-width="0.35">Độc lập – Tự do – Hạnh phúc</text>
<rect x="1171" y="502.6" width="370" height="2.2" fill="#000"/>
<rect x="713.3" y="489.8" width="172.3" height="233.4" stroke="#000" stroke-width="2.2" fill="none"/>
<rect x="1830.6" y="492.1" width="171.4" height="232.8" stroke="#000" stroke-width="2.2" fill="none"/>
<text x="799.6" y="621.6" font-family="'Liberation Serif'" font-size="24.4" font-weight="400" fill="#000" text-anchor="middle"  stroke="#000" stroke-width="0.35">(1)</text>
<text x="1916" y="624" font-family="'Liberation Serif'" font-size="24.4" font-weight="400" fill="#000" text-anchor="middle"  stroke="#000" stroke-width="0.35">(2)</text>
<text x="1036.5" y="611.8" font-family="'Liberation Serif'" font-size="40.3" font-weight="700" fill="#000" textLength="571" lengthAdjust="spacingAndGlyphs"  stroke="#000" stroke-width="0.35">TỜ KHAI ĐĂNG KÝ KẾT HÔN</text>
<text x="947" y="694.2" font-family="'Liberation Serif'" font-size="30.3" font-weight="400" fill="#000" textLength="115.7" lengthAdjust="spacingAndGlyphs"  stroke="#000" stroke-width="0.35">Kính gửi:</text>
<text x="1072" y="686" font-family="'Liberation Serif'" font-size="19.5" font-weight="400" fill="#000"  stroke="#000" stroke-width="0.2">(3)</text>
<text x="1093.6" y="694.2" font-family="'Liberation Serif'" font-size="30.3" font-weight="400" fill="#000" textLength="605" lengthAdjust="spacingAndGlyphs" >................................................................................</text>
<rect x="712.7" y="783.9" width="1291.7" height="2.2" fill="#000"/>
<rect x="712.7" y="850.9" width="1291.7" height="2.2" fill="#000"/>
<rect x="712.7" y="968.9" width="1291.7" height="2.2" fill="#000"/>
<rect x="712.7" y="1035.3000000000002" width="1291.7" height="2.2" fill="#000"/>
<rect x="712.7" y="1102.6000000000001" width="1291.7" height="2.2" fill="#000"/>
<rect x="712.7" y="1169.5" width="1291.7" height="2.2" fill="#000"/>
<rect x="712.6" y="783.9" width="2.2" height="480" fill="#000"/>
<rect x="1059.7" y="783.9" width="2.2" height="480" fill="#000"/>
<rect x="1531.9" y="783.9" width="2.2" height="480" fill="#000"/>
<rect x="2002.3000000000002" y="783.9" width="2.2" height="480" fill="#000"/>
<text x="887.2" y="831.6" font-family="'Liberation Serif'" font-size="30.3" font-weight="700" fill="#000" text-anchor="middle"  stroke="#000" stroke-width="0.35">Thông tin</text>
<text x="1297" y="831.6" font-family="'Liberation Serif'" font-size="30.3" font-weight="700" fill="#000" text-anchor="middle"  stroke="#000" stroke-width="0.35">Bên nữ</text>
<text x="1768" y="831.6" font-family="'Liberation Serif'" font-size="30.3" font-weight="700" fill="#000" text-anchor="middle"  stroke="#000" stroke-width="0.35">Bên nam</text>
<text x="727.7" y="897.5" font-family="'Liberation Serif'" font-size="30.3" font-weight="400" fill="#000"  stroke="#000" stroke-width="0.35">Họ, chữ đệm, tên</text>
<text x="727.7" y="1015" font-family="'Liberation Serif'" font-size="30.3" font-weight="400" fill="#000"  stroke="#000" stroke-width="0.35">Ngày, tháng, năm sinh</text>
<text x="727.7" y="1082.5" font-family="'Liberation Serif'" font-size="30.3" font-weight="400" fill="#000"  stroke="#000" stroke-width="0.35">Dân tộc</text>
<text x="727.7" y="1149.2" font-family="'Liberation Serif'" font-size="30.3" font-weight="400" fill="#000"  stroke="#000" stroke-width="0.35">Quốc tịch</text>
<text x="727.7" y="1216.2" font-family="'Liberation Serif'" font-size="30.3" font-weight="400" fill="#000"  stroke="#000" stroke-width="0.35">Nơi cư trú</text>
<text x="857.7" y="1207" font-family="'Liberation Serif'" font-size="19.5" font-weight="400" fill="#000"  stroke="#000" stroke-width="0.2">(4)</text>
<defs><linearGradient id="bg" x1="0" y1="0" x2="0" y2="1"><stop offset="0" stop-color="#e2e4e8" stop-opacity="0"/><stop offset="0.5" stop-color="#e2e4e8" stop-opacity="0.22"/><stop offset="1" stop-color="#e2e4e8" stop-opacity="0.75"/></linearGradient><linearGradient id="lf" x1="0" y1="0" x2="1" y2="0"><stop offset="0" stop-color="#fff" stop-opacity="0.15"/><stop offset="0.12" stop-color="#fff" stop-opacity="1"/><stop offset="1" stop-color="#fff" stop-opacity="1"/></linearGradient><mask id="lm"><rect x="0" y="1100" width="2560" height="163" fill="url(#lf)"/></mask></defs>
<rect x="0" y="1165" width="2560" height="96" fill="url(#bg)" mask="url(#lm)" style="mix-blend-mode:multiply"/>
<text x="1773.9" y="1246.6" font-family="'Liberation Serif'" font-size="30.8" font-weight="400" fill="#000" textLength="690.8" lengthAdjust="spacingAndGlyphs"  stroke="#000" stroke-width="0.35">Tờ khai đăng ký kết hôn với người nước ngoài | Anzlaw</text>
<path d="M2489,1197.6 H2570 V1262 L2555,1248 H2489 a10,10 0 0 1 -10,-10 V1207.6 a10,10 0 0 1 10,-10 Z" fill="#e9eaec" stroke="#d5d6d8" stroke-width="1.5"/>
<text x="2506.3" y="1232.6" font-family="'Liberation Sans'" font-size="26" font-weight="400" fill="#333333"  stroke="#333333" stroke-width="0.3">Thùng</text>
<rect x="0" y="1260.6" width="2560" height="3" fill="#151a14"/>
<path d="M0,1239 V1263 H30 V1260.6 A22,22 0 0 1 0,1239 Z" fill="#1a2a18"/>
</svg>
</body></html>
